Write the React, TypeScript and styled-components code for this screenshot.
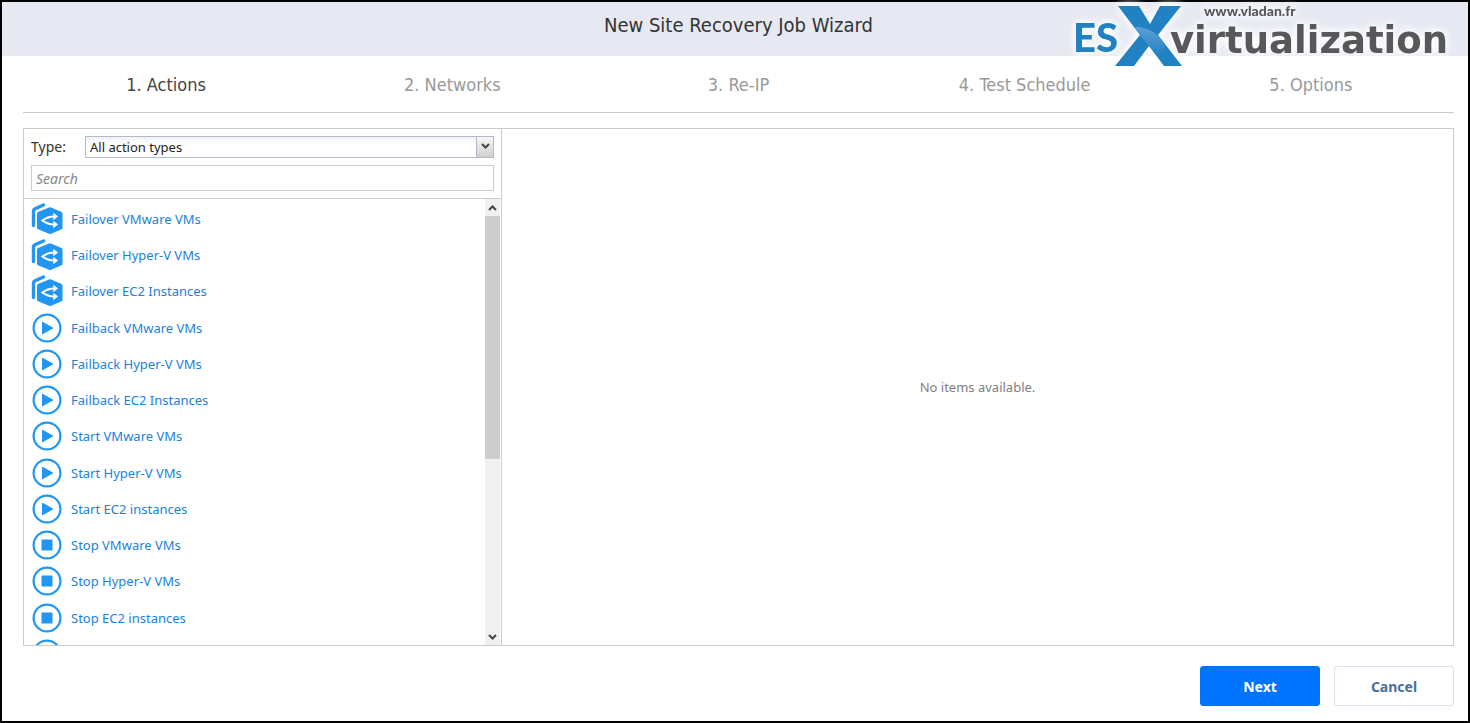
import React from "react";
import styled, { createGlobalStyle } from "styled-components";

const GlobalStyle = createGlobalStyle`
  *, *::before, *::after { box-sizing: border-box; }
  body { margin: 0; background: #fff; }
  body, button, input, select {
    font-family: Tahoma, "Noto Sans", sans-serif;
    font-size: 13px;
  }
`;

const headingFont = `Tahoma, "DejaVu Sans Condensed", "Noto Sans", sans-serif`;

const Shell = styled.div`
  position: relative;
  display: flex;
  flex-direction: column;
  height: 100vh;
  min-height: 420px;
  border: 2px solid #000;
  background: #fff;
  color: #333;
`;

const Header = styled.header`
  flex: none;
  height: 54px;
  padding: 8px 14px 0 21px;
  background: #e6e9f2;
  text-align: center;
`;

const Title = styled.h1`
  margin: 0;
  font-family: ${headingFont};
  font-size: 20px;
  line-height: 30px;
  font-weight: 400;
  color: #333;
`;

const Logo = styled.svg`
  position: absolute;
  top: 0;
  right: 0;
  filter: drop-shadow(0 0 3px #fff) drop-shadow(0 0 4px #fff);
  pointer-events: none;
`;

const Content = styled.div`
  flex: 1;
  min-height: 0;
  display: flex;
  flex-direction: column;
  padding: 0 14px 15px 21px;
`;

const Steps = styled.ol`
  flex: none;
  display: grid;
  grid-template-columns: repeat(5, 1fr);
  height: 57px;
  margin: 0 0 15px;
  padding: 0;
  list-style: none;
  border-bottom: 1px solid #ccc;
`;

const Step = styled.li<{ $active?: boolean }>`
  font-family: ${headingFont};
  font-size: 18px;
  line-height: 58px;
  text-align: center;
  color: ${(p) => (p.$active ? "#444" : "#999")};
`;

const Panels = styled.main`
  flex: 1;
  min-height: 0;
  display: flex;
  border: 1px solid #ccc;
`;

const Sidebar = styled.section`
  flex: none;
  width: 478px;
  display: flex;
  flex-direction: column;
  border-right: 1px solid #ccc;
`;

const Filters = styled.div`
  flex: none;
  display: flex;
  flex-direction: column;
  gap: 7px;
  padding: 7px;
  border-bottom: 1px solid #ccc;
`;

const TypeRow = styled.div`
  display: flex;
  align-items: center;
  height: 22px;
`;

const TypeLabel = styled.label`
  width: 54px;
  font-size: 14px;
  line-height: 24px;
`;

const SelectBox = styled.div`
  position: relative;
  flex: 1;
  height: 22px;
`;

const Select = styled.select`
  appearance: none;
  display: block;
  width: 100%;
  height: 22px;
  padding: 0 22px 0 4px;
  border: 1px solid #b5b8c8;
  border-radius: 0;
  background: linear-gradient(#eef3f5, #fff 8px);
  color: #222;
`;

const SelectArrow = styled.span`
  position: absolute;
  top: 1px;
  right: 1px;
  bottom: 1px;
  width: 17px;
  display: flex;
  justify-content: center;
  padding-top: 6px;
  border-left: 1px solid #b5b8c8;
  background: linear-gradient(#f7f7f7, #cfcfcf);
  pointer-events: none;
`;

const Search = styled.input`
  display: block;
  width: 100%;
  height: 26px;
  padding: 0 4px;
  border: 1px solid #ccc;
  border-radius: 0;
  background: #fff;
  font-size: 14px;
  &::placeholder {
    color: #888;
    font-style: italic;
    opacity: 1;
  }
`;

const ListArea = styled.div`
  flex: 1;
  min-height: 0;
  display: flex;
  padding-right: 1px;
`;

const ActionViewport = styled.div`
  flex: 1;
  height: 100%;
  padding: 2px 0 0 8px;
  overflow: hidden;
`;

const ActionList = styled.ul`
  display: grid;
  grid-auto-rows: 1fr;
  height: 471px;
  margin: 0;
  padding: 0;
  list-style: none;
`;

const ActionButton = styled.button`
  display: flex;
  align-items: center;
  gap: 9px;
  width: 100%;
  height: 36px;
  padding: 0;
  border: 0;
  background: none;
  color: #1a82dc;
  text-align: left;
  cursor: pointer;
`;

const ActionIconSvg = styled.svg`
  flex: none;
  display: block;
`;

const Scrollbar = styled.div`
  flex: none;
  width: 15px;
  display: flex;
  flex-direction: column;
  background: #f0f0f0;
`;

const ScrollCap = styled.span`
  flex: none;
  height: 17px;
  display: flex;
  align-items: center;
  justify-content: center;
`;

const ScrollTrack = styled.div`
  flex: 1;
`;

const ScrollThumb = styled.div`
  height: 59%;
  background: #cdcdcd;
`;

const Empty = styled.section`
  flex: 1;
  display: flex;
  align-items: center;
  justify-content: center;
  color: #808080;
`;

const Footer = styled.footer`
  flex: none;
  display: flex;
  justify-content: flex-end;
  gap: 14px;
  padding-top: 20px;
`;

const Button = styled.button<{ $primary?: boolean }>`
  width: 120px;
  height: 40px;
  border: 1px solid ${(p) => (p.$primary ? "#0073ff" : "#d9e2ee")};
  border-radius: 3px;
  background: ${(p) => (p.$primary ? "#0073ff" : "#fff")};
  color: ${(p) => (p.$primary ? "#fff" : "#4a6e9b")};
  font-size: 14px;
  font-weight: 700;
  cursor: pointer;
`;

type Kind = "failover" | "play" | "stop";

const actions: { label: string; kind: Kind }[] = [
  { label: "Failover VMware VMs", kind: "failover" },
  { label: "Failover Hyper-V VMs", kind: "failover" },
  { label: "Failover EC2 Instances", kind: "failover" },
  { label: "Failback VMware VMs", kind: "play" },
  { label: "Failback Hyper-V VMs", kind: "play" },
  { label: "Failback EC2 Instances", kind: "play" },
  { label: "Start VMware VMs", kind: "play" },
  { label: "Start Hyper-V VMs", kind: "play" },
  { label: "Start EC2 instances", kind: "play" },
  { label: "Stop VMware VMs", kind: "stop" },
  { label: "Stop Hyper-V VMs", kind: "stop" },
  { label: "Stop EC2 instances", kind: "stop" },
];

const steps = ["1. Actions", "2. Networks", "3. Re-IP", "4. Test Schedule", "5. Options"];

function ActionIcon({ kind }: { kind: Kind }) {
  return (
    <ActionIconSvg width="30" height="32" viewBox="0 0 30 32" overflow="visible" aria-hidden="true">
      {kind === "failover" ? (
        <>
          <path
            d="M1.500 22.500V8Q1.500 6.400 3 5.700L11.500 2"
            fill="none"
            stroke="#2196f3"
            strokeWidth="3.400"
            strokeLinecap="round"
          />
          <path
            d="M17 4.500Q18 4 19 4.500L29.500 9Q30.500 9.500 30.500 10.500V24.700Q30.500 25.700 29.500 26.200L19 30.800Q18 31.200 17 30.800L6 26.200Q5 25.700 5 24.700V10.500Q5 9.500 6 9Z"
            fill="#2196f3"
          />
          <path
            d="M22.500 13.500Q15.500 13.500 10.500 17.500Q15.500 21.500 22.500 21.500"
            fill="none"
            stroke="#fff"
            strokeWidth="2.200"
          />
          <path
            d="M21.500 10.500L25.500 13.500L21.500 16.500L22.500 13.500ZM21.500 18.500L25.500 21.500L21.500 24.500L22.500 21.500Z"
            fill="#fff"
            stroke="#fff"
          />
        </>
      ) : (
        <>
          <circle cx="15" cy="16" r="13.400" fill="none" stroke="#2196f3" strokeWidth="2.200" />
          {kind === "play" ? (
            <path d="M10 10.500Q10 9.500 11 10L20.800 15.400Q21.600 16 20.800 16.600L11 22Q10 22.500 10 21.500Z" fill="#2196f3" />
          ) : (
            <rect x="9.500" y="10.500" width="11" height="11" rx="0.500" fill="#2196f3" />
          )}
        </>
      )}
    </ActionIconSvg>
  );
}

function Chevron({ up }: { up?: boolean }) {
  return (
    <svg width="9" height="6" viewBox="0 0 9 6" aria-hidden="true">
      <path d={up ? "M1 5L4.5 1.500L8 5" : "M1 1L4.500 4.500L8 1"} fill="none" stroke="#444" strokeWidth="2" />
    </svg>
  );
}

function BrandLogo() {
  return (
    <Logo width="408" height="76" viewBox="0 0 408 76" role="img" aria-label="ESX virtualization">
      <defs>
        <linearGradient id="shine" x1="0" y1="0" x2="0" y2="1">
          <stop offset="0" stopColor="#5a9fd6" />
          <stop offset="1" stopColor="#2081c3" />
        </linearGradient>
      </defs>
      <text x="13" y="50" fontFamily="Lato" fontWeight="900" fontSize="40" fill="#2081c3">
        ES
      </text>
      <path d="M58 4H79L90 22L100 4H121L98 33L122 64H104L89 44L74 64H55L80 33Z" fill="#2081c3" />
      <path d="M74 25Q94 24 106 44L98 55L89 44L84 38L80 33Z" fill="url(#shine)" />
      <text x="110" y="51" fontFamily="DejaVu Sans" fontWeight="700" fontSize="37" fill="#58585a">
        virtualization
      </text>
      <text x="144" y="14" fontFamily="Lato" fontWeight="900" fontSize="14" fill="#58585a">
        www.vladan.fr
      </text>
    </Logo>
  );
}

export default function App() {
  return (
    <>
      <GlobalStyle />
      <Shell>
        <Header>
          <Title>New Site Recovery Job Wizard</Title>
        </Header>
        <BrandLogo />
        <Content>
          <Steps>
            {steps.map((step, i) => (
              <Step key={step} $active={i === 0} aria-current={i === 0 ? "step" : undefined}>
                {step}
              </Step>
            ))}
          </Steps>
          <Panels>
            <Sidebar>
              <Filters>
                <TypeRow>
                  <TypeLabel htmlFor="type">Type:</TypeLabel>
                  <SelectBox>
                    <Select id="type">
                      <option>All action types</option>
                    </Select>
                    <SelectArrow>
                      <Chevron />
                    </SelectArrow>
                  </SelectBox>
                </TypeRow>
                <Search type="text" placeholder="Search" aria-label="Search" />
              </Filters>
              <ListArea>
                <ActionViewport>
                  <ActionList>
                    {actions.map((action) => (
                      <li key={action.label}>
                        <ActionButton type="button">
                          <ActionIcon kind={action.kind} />
                          {action.label}
                        </ActionButton>
                      </li>
                    ))}
                    <li>
                      <ActionButton type="button" aria-label="Next action">
                        <ActionIcon kind="play" />
                      </ActionButton>
                    </li>
                  </ActionList>
                </ActionViewport>
                <Scrollbar aria-hidden="true">
                  <ScrollCap>
                    <Chevron up />
                  </ScrollCap>
                  <ScrollTrack>
                    <ScrollThumb />
                  </ScrollTrack>
                  <ScrollCap>
                    <Chevron />
                  </ScrollCap>
                </Scrollbar>
              </ListArea>
            </Sidebar>
            <Empty>No items available.</Empty>
          </Panels>
          <Footer>
            <Button type="button" $primary>
              Next
            </Button>
            <Button type="button">Cancel</Button>
          </Footer>
        </Content>
      </Shell>
    </>
  );
}
